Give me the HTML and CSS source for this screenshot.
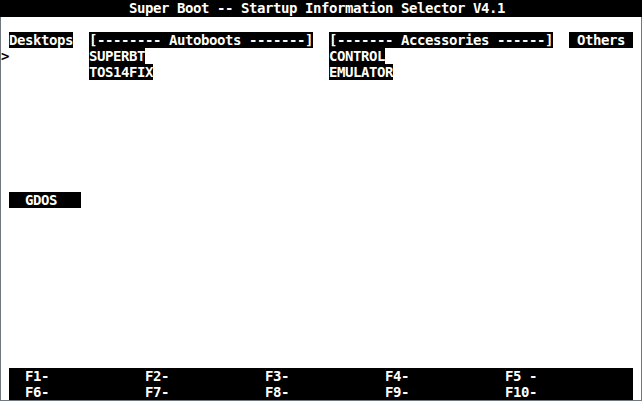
FILE: index.html
```html
<!DOCTYPE html>
<html lang="en">
<head>
    <meta charset="UTF-8">
    <title>Super Boot</title>
    <link rel="stylesheet" href="styles.css">
</head>
<body>
    <div class="title">Super Boot -- Startup Information Selector V4.1</div>

    <div class="screen">
        <div class="menus">
            <div class="col col-desk">
                <span class="hdr ind">Desktops</span>
                <span class="arrow">&gt;</span>
            </div>
            <div class="col col-wide">
                <span class="hdr">[-------- Autoboots -------]</span>
                <span class="sel">SUPERBT</span>
                <span class="sel">TOS14FIX</span>
            </div>
            <div class="col col-wide">
                <span class="hdr">[------- Accessories ------]</span>
                <span class="sel">CONTROL</span>
                <span class="sel">EMULATOR</span>
            </div>
            <div class="col">
                <span class="hdr"> Others </span>
            </div>
        </div>

        <div class="gdos"><span class="hdr">  GDOS   </span></div>

        <div class="fkeys">
            <div class="fkey-row">
                <span>F1-</span><span>F2-</span><span>F3-</span><span>F4-</span><span class="hdr">F5 -</span>
            </div>
            <div class="fkey-row">
                <span>F6-</span><span>F7-</span><span>F8-</span><span>F9-</span><span>F10-</span>
            </div>
        </div>
    </div>
</body>
</html>
```

FILE: styles.css
```css
body { margin: 0; background: #fff; color: #000; font-family: "DejaVu Sans Mono", monospace; font-weight: bold; font-size: 14px; letter-spacing: -0.43px; line-height: 16px; }
.title { width: 513px; height: 17px; padding-left: 129px; background: #000; color: #fff; white-space: pre; }
.screen { width: 640px; height: 383px; display: flex; flex-direction: column; border: 1px solid #70777f; border-top: 0; }

.menus { display: flex; margin-top: 15px; }
.col { display: flex; flex-direction: column; align-items: flex-start; }
.col-desk { width: 88px; }
.col-wide { width: 240px; }
.hdr, .sel { background: #000; color: #fff; height: 16px; white-space: pre; }
.ind { margin-left: 8px; }
.arrow { height: 16px; }

.gdos { margin-top: 112px; padding-left: 8px; display: flex; }

.fkeys { margin: auto 8px 0; background: #000; color: #fff; }
.fkey-row { display: grid; grid-template-columns: repeat(5, 120px); padding-left: 16px; height: 16px; }
```
